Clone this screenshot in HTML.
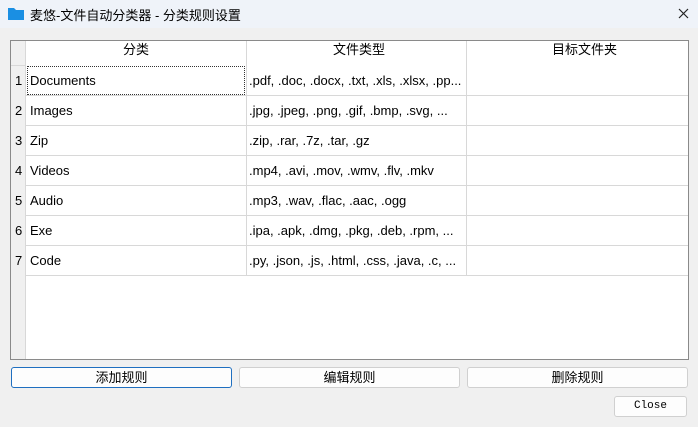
<!DOCTYPE html><html><head><meta charset="utf-8"><style>
*{margin:0;padding:0;box-sizing:border-box}
body{width:698px;height:427px;background:#f0f0f0;font-family:"Liberation Sans","Noto Sans CJK SC",sans-serif;font-size:13px;color:#000;position:relative;overflow:hidden}
.t{position:absolute;left:0;top:0;width:698px;height:28px;background:#eff3f9}
.a{position:absolute}
.frame{position:absolute;left:10px;top:40px;width:679px;height:320px;border:1px solid #8a8a8a;background:#fff}
.rh{position:absolute;left:0;top:0;width:15px;height:318px;background:#f0f0f0;border-right:1px solid #d8d8d8}
.hl{position:absolute;left:15px;width:662px;height:1px;background:#d8d8d8}
.vl{position:absolute;top:0;width:1px;height:234px;background:#d8d8d8}
.c{position:absolute;white-space:nowrap;line-height:30px}
.btn{position:absolute;top:367px;height:21px;background:#fdfdfd;border:1px solid #d0d0d0;border-radius:3px;text-align:center;line-height:19px;font-size:13px}
</style></head><body>
<div class="t"></div>
<svg class="a" style="left:8px;top:7px" width="16" height="13"><path d="M0 1h6l2 2h8v10H0z" fill="#1a8fe3"/></svg>
<div class="a" style="left:30px;top:5px;font-size:13px">麦悠-文件自动分类器 - 分类规则设置</div>
<svg class="a" style="left:678px;top:8px" width="11" height="11"><path d="M1 1L10 10M10 1L1 10" stroke="#222" stroke-width="1.2"/></svg>
<div class="frame">
<div class="rh"></div>
<div class="hl" style="left:0;top:24px;width:15px"></div>
<div class="vl" style="left:235px"></div><div class="vl" style="left:455px"></div>
<div class="hl" style="top:54px"></div><div class="hl" style="top:84px"></div><div class="hl" style="top:114px"></div><div class="hl" style="top:144px"></div><div class="hl" style="top:174px"></div><div class="hl" style="top:204px"></div><div class="hl" style="top:234px"></div>
<div class="c" style="left:112px;top:-3px;line-height:24px">分类</div>
<div class="c" style="left:322px;top:-3px;line-height:24px">文件类型</div>
<div class="c" style="left:541px;top:-3px;line-height:24px">目标文件夹</div>
<div class="a" style="left:16px;top:25px;width:218px;height:29px;border:1px dotted #333"></div>
<div class="c" style="left:4px;top:25px">1</div><div class="c" style="left:19px;top:25px">Documents</div><div class="c" style="left:238px;top:25px">.pdf, .doc, .docx, .txt, .xls, .xlsx, .pp...</div>
<div class="c" style="left:4px;top:55px">2</div><div class="c" style="left:19px;top:55px">Images</div><div class="c" style="left:238px;top:55px">.jpg, .jpeg, .png, .gif, .bmp, .svg, ...</div>
<div class="c" style="left:4px;top:85px">3</div><div class="c" style="left:19px;top:85px">Zip</div><div class="c" style="left:238px;top:85px">.zip, .rar, .7z, .tar, .gz</div>
<div class="c" style="left:4px;top:115px">4</div><div class="c" style="left:19px;top:115px">Videos</div><div class="c" style="left:238px;top:115px">.mp4, .avi, .mov, .wmv, .flv, .mkv</div>
<div class="c" style="left:4px;top:145px">5</div><div class="c" style="left:19px;top:145px">Audio</div><div class="c" style="left:238px;top:145px">.mp3, .wav, .flac, .aac, .ogg</div>
<div class="c" style="left:4px;top:175px">6</div><div class="c" style="left:19px;top:175px">Exe</div><div class="c" style="left:238px;top:175px">.ipa, .apk, .dmg, .pkg, .deb, .rpm, ...</div>
<div class="c" style="left:4px;top:205px">7</div><div class="c" style="left:19px;top:205px">Code</div><div class="c" style="left:238px;top:205px">.py, .json, .js, .html, .css, .java, .c, ...</div>
</div>
<div class="btn" style="left:11px;width:221px;border-color:#1f6fc0">添加规则</div>
<div class="btn" style="left:239px;width:221px">编辑规则</div>
<div class="btn" style="left:467px;width:221px">删除规则</div>
<div class="btn" style="left:614px;top:396px;width:73px;height:21px;font-family:'Liberation Mono',monospace;font-size:11px">Close</div>
</body></html>
